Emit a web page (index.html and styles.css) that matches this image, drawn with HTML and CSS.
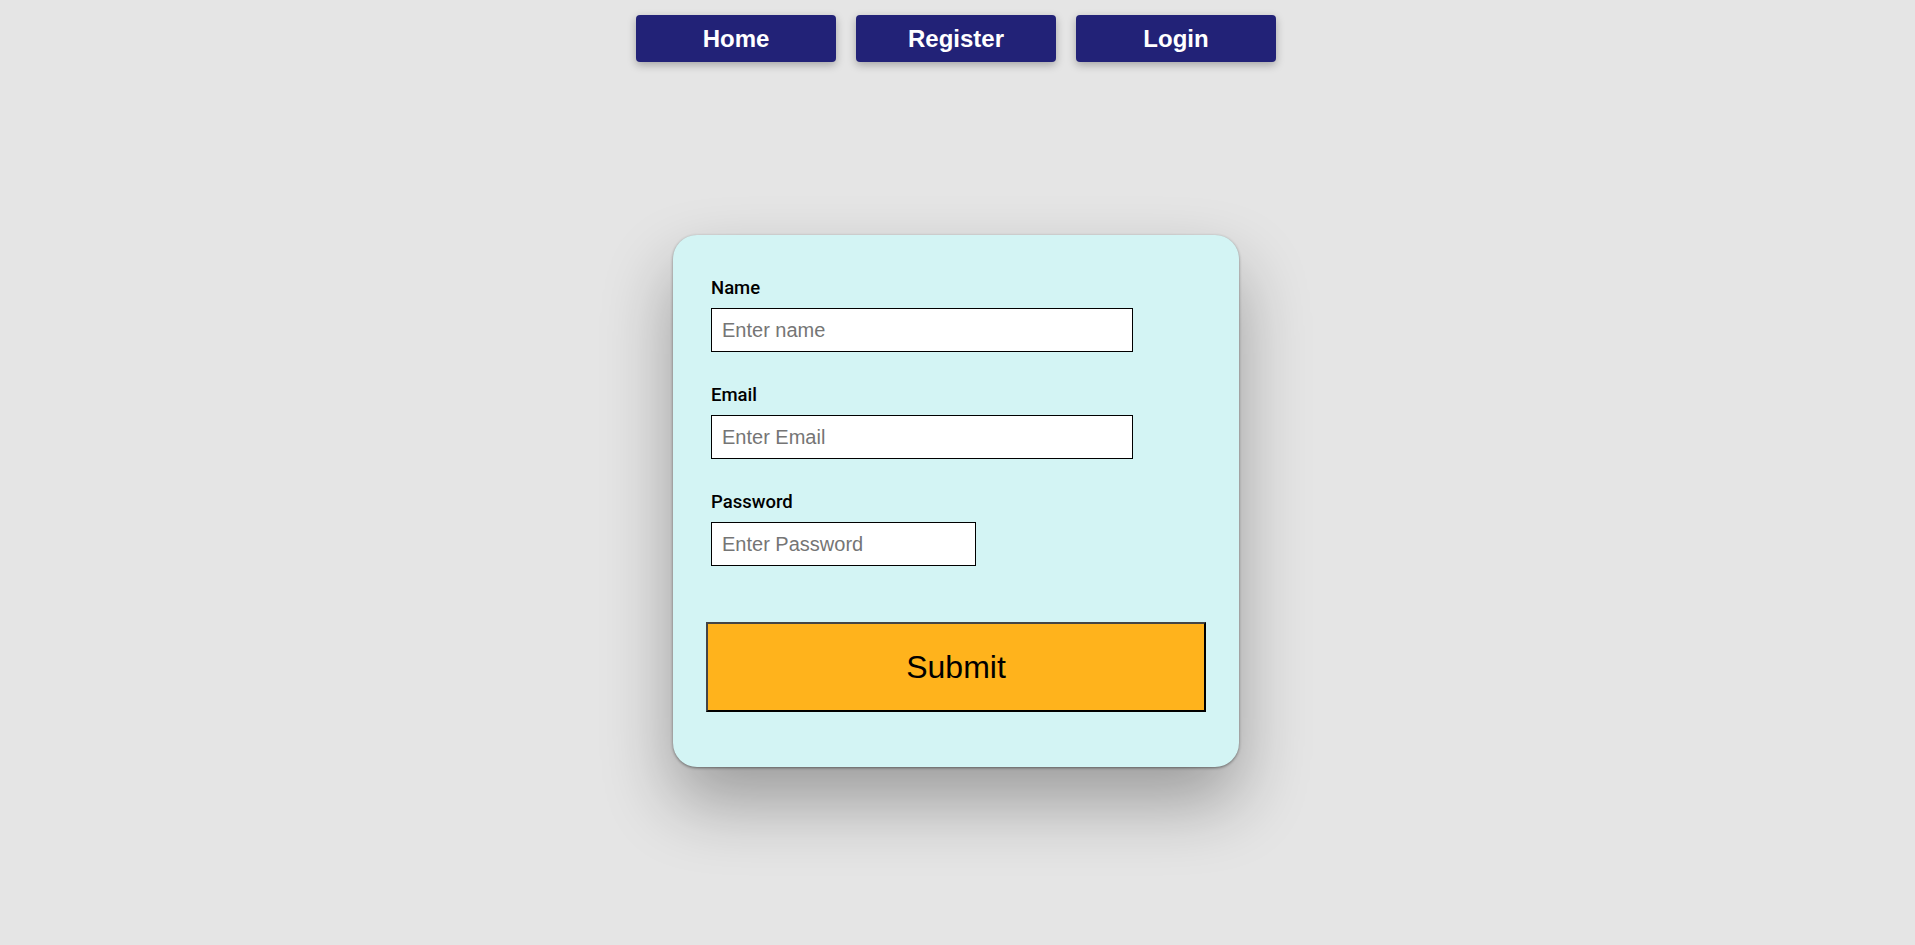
FILE: index.html
```html
<!DOCTYPE html>
<html lang="en">
<head>
<meta charset="utf-8">
<title>Register</title>
<link rel="stylesheet" href="styles.css">
</head>
<body>
  <nav class="nav">
    <a class="nav-btn" href="#">Home</a>
    <a class="nav-btn" href="#">Register</a>
    <a class="nav-btn" href="#">Login</a>
  </nav>
  <main class="page">
    <form class="card">
      <div class="field">
        <label class="label" for="name">Name</label>
        <input class="input input-wide" id="name" type="text" placeholder="Enter name">
      </div>
      <div class="field">
        <label class="label" for="email">Email</label>
        <input class="input input-wide" id="email" type="email" placeholder="Enter Email">
      </div>
      <div class="field">
        <label class="label" for="password">Password</label>
        <input class="input input-short" id="password" type="password" placeholder="Enter Password">
      </div>
      <button class="submit" type="button">Submit</button>
    </form>
  </main>
</body>
</html>
```
FILE: styles.css
```css
* { box-sizing: border-box; }

html, body {
  margin: 0;
  padding: 0;
}

body {
  background: #e5e5e5;
  font-family: "Liberation Sans", Arial, sans-serif;
  min-height: 945px;
  padding-right: 3px;
}

.nav {
  display: flex;
  justify-content: center;
  gap: 20px;
  padding-top: 15px;
}

.nav-btn {
  display: flex;
  align-items: center;
  justify-content: center;
  width: 200px;
  height: 47px;
  background: #222277;
  color: #ffffff;
  font-family: "Liberation Sans", Arial, sans-serif;
  font-weight: bold;
  font-size: 24px;
  text-decoration: none;
  border-radius: 4px;
  box-shadow: 0 3px 8px rgba(0, 0, 0, 0.28);
}

.page {
  display: flex;
  justify-content: center;
  padding-top: 173px;
}

.card {
  width: 566px;
  height: 532px;
  background: #d3f4f4;
  border-radius: 24px;
  padding: 43px 33px 55px;
  box-shadow: 0 1px 3px rgba(0, 0, 0, 0.45), 0 35px 70px rgba(0, 0, 0, 0.32);
  display: flex;
  flex-direction: column;
}

.field {
  display: flex;
  flex-direction: column;
  align-items: flex-start;
  margin-left: 5px;
  margin-bottom: 33px;
}

.field:nth-child(3) {
  margin-bottom: 56px;
}

.label {
  font-family: Roboto, "Liberation Sans", sans-serif;
  font-weight: 500;
  font-size: 18.5px;
  line-height: 21px;
  color: #000;
  margin-bottom: 9px;
}

.input {
  height: 44px;
  border: 1px solid #000;
  background: #fff;
  padding: 0 10px;
  font-family: "Liberation Sans", Arial, sans-serif;
  font-size: 20px;
  color: #000;
  border-radius: 0;
  outline: none;
}

.input::placeholder {
  color: #757575;
}

.input-wide { width: 422px; }
.input-short { width: 265px; }

.submit {
  width: 500px;
  height: 90px;
  background: #ffb31c;
  border: 2px solid;
  border-color: #444 #000 #000 #444;
  font-family: "Liberation Sans", Arial, sans-serif;
  font-size: 32px;
  color: #000;
  padding: 0;
  cursor: pointer;
}
```
